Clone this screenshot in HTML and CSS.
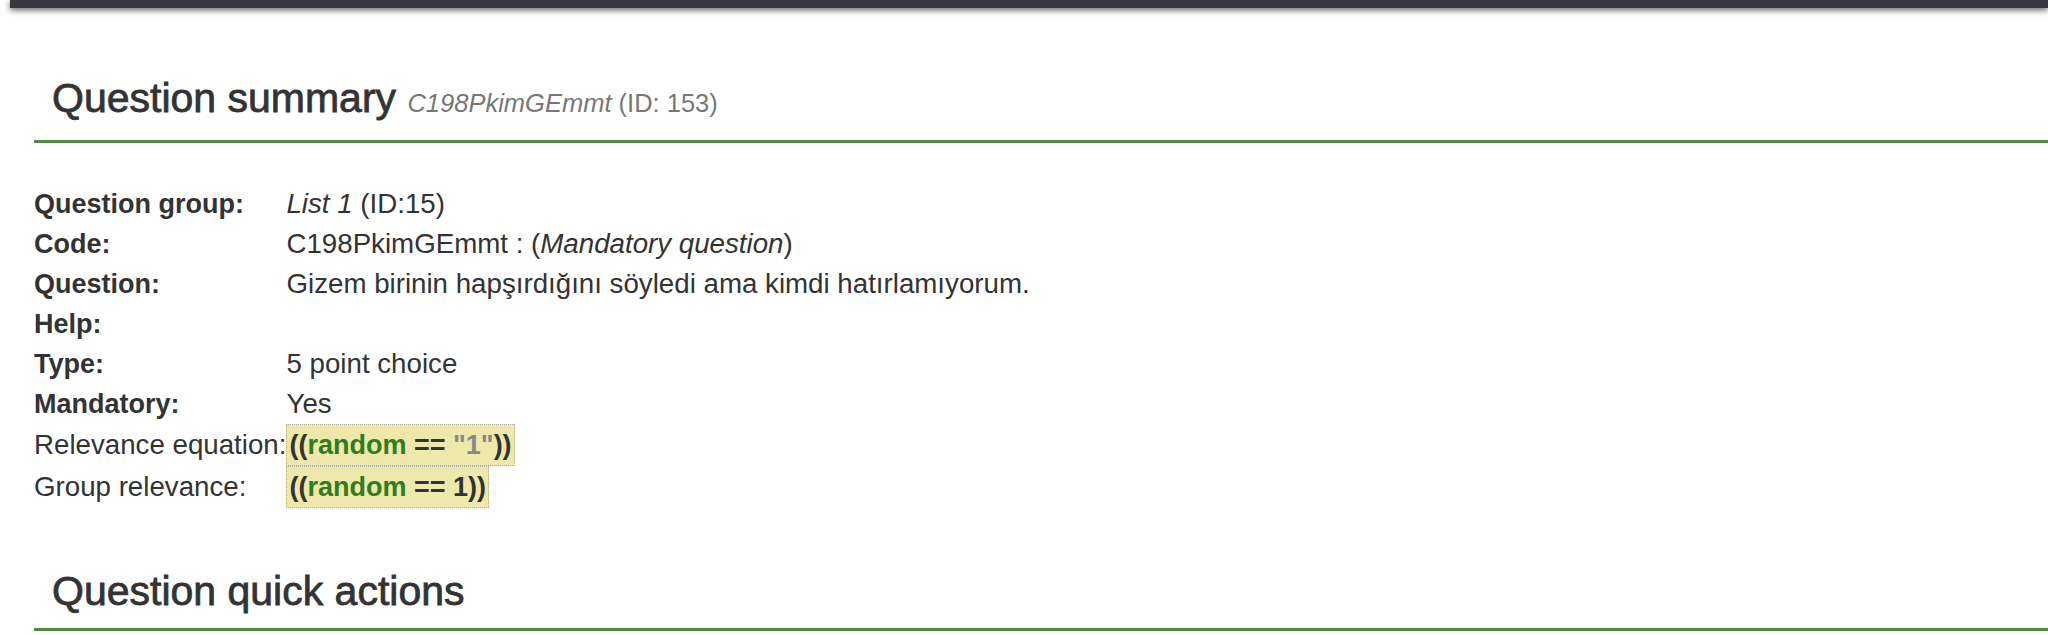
FILE: index.html
```html
<!DOCTYPE html>
<html lang="tr">
<head>
	<meta charset="UTF-8">
	<title>Question summary</title>
	<meta name="viewport" content="width=device-width, initial-scale=1.0">
	<link rel="stylesheet" href="styles.css">
</head>
<body>
	<div class="topbar"></div>
	<main class="content">
		<section class="summary">
			<h3 class="pagetitle">Question summary <small><em>C198PkimGEmmt</em> (ID: 153)</small></h3>
			<table class="summary-table">
				<tr>
					<th>Question group:</th>
					<td><em>List 1</em> (ID:15)</td>
				</tr>
				<tr>
					<th>Code:</th>
					<td>C198PkimGEmmt : (<em>Mandatory question</em>)</td>
				</tr>
				<tr>
					<th>Question:</th>
					<td>Gizem birinin hapşırdığını söyledi ama kimdi hatırlamıyorum.</td>
				</tr>
				<tr>
					<th>Help:</th>
					<td></td>
				</tr>
				<tr>
					<th>Type:</th>
					<td>5 point choice</td>
				</tr>
				<tr>
					<th>Mandatory:</th>
					<td>Yes</td>
				</tr>
				<tr>
					<td>Relevance equation:</td>
					<td><span class="em-expression">((<span class="em-var">random</span> == <span class="em-str">"1"</span>))</span></td>
				</tr>
				<tr>
					<td>Group relevance:</td>
					<td><span class="em-expression">((<span class="em-var">random</span> == 1))</span></td>
				</tr>
			</table>
		</section>
		<section class="quick-actions">
			<h3 class="pagetitle">Question quick actions</h3>
		</section>
	</main>
</body>
</html>
```

FILE: styles.css
```css
html{
	font-family: "Liberation Sans", Arial, sans-serif;
	font-size: 27.7px;
	color: #333;
}
body{
	margin: 0;
	background-color: #fff;
	overflow: hidden;
}

.topbar{
	height: 8px;
	margin-left: 10px;
	background-color: #37383f;
	box-shadow: 0 2px 6px rgba(0,0,0,.65);
}

.content{
	padding-left: 34px;
}

.pagetitle{
	margin: 68px 0 0;
	padding: 0 0 15px 18px;
	font-size: 41px;
	font-weight: normal;
	line-height: 44px;
	color: #333;
	-webkit-text-stroke: .8px #333;
	border-bottom: 3px solid #4d8b3f;
}
.pagetitle small{
	font-size: 25.5px;
	color: #777;
	-webkit-text-stroke: 0;
}

.summary-table{
	margin-top: 41px;
	border-collapse: collapse;
	border-spacing: 0;
}
.summary-table th,
.summary-table td{
	padding: 0;
	line-height: 40px;
	text-align: left;
	vertical-align: middle;
	white-space: nowrap;
}
.summary-table th{
	font-size: 27px;
}
.summary-table th:first-child,
.summary-table td:first-child{
	width: 251px;
}

.em-expression{
	display: inline-block;
	padding: 0 2px;
	line-height: 40px;
	font-weight: bold;
	font-size: 27px;
	background-color: #eee8aa;
	border: 1px dotted #aaa;
}
.em-var{
	color: #2f7d20;
}
.em-str{
	color: #888;
}

.quick-actions .pagetitle{
	margin-top: 61px;
}
```
